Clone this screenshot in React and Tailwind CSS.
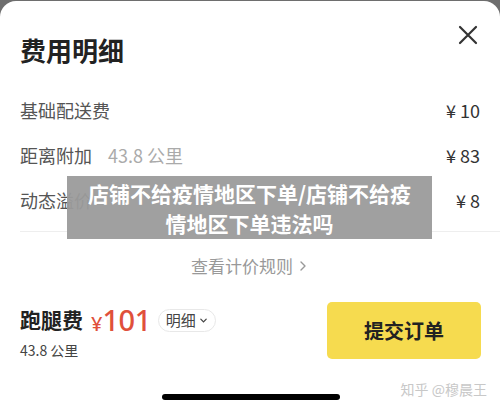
import React from "react";

const F = { fontFamily: '"Noto Sans CJK SC", "Noto Sans", sans-serif' };

export default function App() {
  return (
    <div className="w-[500px] h-[416px] bg-[#6e6e6e] overflow-hidden" style={F}>
      <div className="relative mt-[1px] h-[415px] bg-white rounded-t-[16px] flex flex-col">
        <div className="flex items-start justify-between pl-[20px] pr-[22px] pt-[30px]">
          <div className="text-[26px] leading-[38px] font-bold text-[#222]">费用明细</div>
          <svg width="20" height="20" viewBox="0 0 20 20" className="mt-[-6px]">
            <path d="M2 2 L18 18 M18 2 L2 18" stroke="#333" strokeWidth="2.2" strokeLinecap="round" />
          </svg>
        </div>

        <div className="flex flex-col pl-[20px] pr-[20px] mt-[28px] text-[18px] leading-[26px] text-[#555]">
          <div className="flex justify-between h-[45px] items-start pt-[0px]">
            <span>基础配送费</span>
            <span className="text-[#333]">¥ 10</span>
          </div>
          <div className="flex justify-between h-[45px] items-start">
            <span>
              距离附加<span className="ml-[16px] text-[#aaa]">43.8 公里</span>
            </span>
            <span className="text-[#333]">¥ 83</span>
          </div>
          <div className="flex justify-between h-[44px] items-start">
            <span>动态溢价</span>
            <span className="text-[#333]">¥ 8</span>
          </div>
        </div>
        <div className="ml-[20px] h-px bg-[#eee]" />
        <div className="flex justify-center items-center mt-[22px] text-[17px] leading-[24px] text-[#999]">
          查看计价规则
          <svg width="12" height="12" viewBox="0 0 12 12" className="ml-[4px]">
            <path d="M4 2 L8 6 L4 10" stroke="#999" strokeWidth="1.4" fill="none" strokeLinecap="round" strokeLinejoin="round" />
          </svg>
        </div>

        <div className="flex justify-between items-start pl-[20px] pr-[19px] mt-[23px]">
          <div className="flex flex-col">
            <div className="flex items-center h-[38px]">
              <span className="text-[21px] font-bold text-[#222]">跑腿费</span>
              <span className="ml-[8px] text-[#e0503b] font-medium flex items-baseline" style={{ fontFamily: '"Noto Sans", sans-serif' }}>
                <span className="text-[20px]">¥</span>
                <span className="text-[29px] leading-[38px] tracking-[-0.5px]">101</span>
              </span>
              <span className="ml-[7px] flex items-center h-[23px] px-[7px] rounded-full border border-[#e8e8e8] text-[15px] text-[#444]">
                明细
                <svg width="9" height="9" viewBox="0 0 10 10" className="ml-[3px]">
                  <path d="M2 3.5 L5 6.5 L8 3.5" stroke="#444" strokeWidth="1.4" fill="none" strokeLinecap="round" />
                </svg>
              </span>
            </div>
            <div className="text-[14px] leading-[20px] text-[#444] mt-[1px]">43.8 公里</div>
          </div>
          <div className="w-[154px] h-[57px] mt-[1px] rounded-[5px] bg-[#f6db4f] flex items-center justify-center text-[20px] font-bold text-[#222]">
            提交订单
          </div>
        </div>

        <div className="flex-1 relative">
          <div className="absolute left-[162px] top-[34px] w-[178px] h-[6px] rounded-full bg-black" />
          <div className="absolute right-[13px] top-[19px] text-[14px] text-[#c8c8c8]">知乎 @穆晨王</div>
        </div>

        <div className="absolute left-[67px] top-[175px] w-[365px] h-[63px] bg-[#9b9b9b]/95 flex items-center justify-center text-center text-white font-bold text-[21px] leading-[30px]">
          店铺不给疫情地区下单/店铺不给疫<br />情地区下单违法吗
        </div>
      </div>
    </div>
  );
}
